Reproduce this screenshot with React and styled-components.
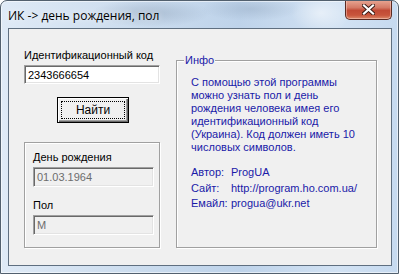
import React from "react";
import styled, { createGlobalStyle } from "styled-components";

const Global = createGlobalStyle`
  html, body { margin: 0; padding: 0; background: #ffffff; }
  body { width: 399px; height: 274px; overflow: hidden; }
  * { box-sizing: border-box; }
`;

const Window = styled.div`
  width: 399px;
  height: 274px;
  display: flex;
  flex-direction: column;
  border: 1px solid #52606e;
  border-radius: 7px 7px 0 0;
  background:
    radial-gradient(ellipse 60px 14px at 150px 12px, rgba(120,140,165,0.35), transparent),
    radial-gradient(ellipse 50px 12px at 250px 8px, rgba(130,150,175,0.3), transparent),
    radial-gradient(ellipse 30px 20px at 320px 12px, rgba(255,255,255,0.5), transparent),
    linear-gradient(90deg, #dfeaf6 0%, #cbdcee 35%, #bed3ea 60%, #d2e2f3 85%, #c6daf0 100%);
  box-shadow: inset 0 0 0 1px rgba(255,255,255,0.55);
  overflow: hidden;
`;

const TitleBar = styled.div`
  height: 27px;
  display: flex;
  align-items: flex-start;
  flex-shrink: 0;
`;

const Title = styled.div`
  padding: 8px 0 0 7px;
  font-family: "Open Sans", "Noto Sans", sans-serif;
  font-size: 12px;
  line-height: 14px;
  color: #000;
  text-shadow: 0 0 6px rgba(255,255,255,0.9);
`;

const CloseButton = styled.div`
  margin-left: auto;
  margin-right: 6px;
  margin-top: -1px;
  width: 47px;
  height: 20px;
  border: 1px solid #5a2a22;
  border-top: none;
  border-radius: 0 0 5px 5px;
  background: linear-gradient(180deg, #e9a895 0%, #d47a66 40%, #c14a35 55%, #c8553c 80%, #dc8a6a 100%);
  box-shadow: inset 0 0 0 1px rgba(255,220,210,0.45);
  display: flex;
  align-items: center;
  justify-content: center;
`;

const Client = styled.div`
  margin: 0 6px 7px 7px;
  flex: 1;
  border: 1px solid #5f6f80;
  background: #f0f0f0;
  display: flex;
  align-items: flex-start;
  gap: 16px;
  padding: 20px 0 0 15px;
  font-family: "Liberation Sans", Arial, sans-serif;
  font-size: 11px;
`;

const LeftColumn = styled.div`
  width: 136px;
  display: flex;
  flex-direction: column;
  align-items: flex-start;
`;

const Label = styled.div`
  line-height: 13px;
  height: 13px;
  color: #000;
  margin-top: ${p => p.$mt || 0}px;
`;

const Edit = styled.div`
  width: ${p => p.$w}px;
  height: ${p => p.$h}px;
  margin-top: ${p => p.$mt || 0}px;
  border: 1px solid;
  border-color: #a0a0a0 #ffffff #ffffff #a0a0a0;
  box-shadow: inset 1px 1px 0 #696969, inset -1px -1px 0 #e3e3e3;
  background: ${p => (p.$disabled ? "#f0f0f0" : "#ffffff")};
  color: ${p => (p.$disabled ? "#6d6d6d" : "#000")};
  padding: 0 0 0 3px;
  display: flex;
  align-items: center;
  font-size: 11px;
`;

const Button = styled.div`
  margin: 13px 0 0 33px;
  width: 72px;
  height: 26px;
  border: 1px solid #000;
  background: #f0f0f0;
  box-shadow: inset 1px 1px 0 #ffffff, inset -1px -1px 0 #696969, inset -2px -2px 0 #a0a0a0;
  padding: 3px;
  display: flex;
`;

const FocusRect = styled.div`
  flex: 1;
  border: 1px dotted #000;
  display: flex;
  align-items: center;
  justify-content: center;
  font-size: 12px;
  color: #000;
`;

const GroupBox = styled.div`
  position: relative;
  width: ${p => p.$w}px;
  height: ${p => p.$h}px;
  margin-top: ${p => p.$mt}px;
  margin-left: ${p => p.$ml || 0}px;
  border: 1px solid #a0a0a0;
  box-shadow: inset 1px 1px 0 #ffffff, 1px 1px 0 #ffffff;
  padding: ${p => p.$pad};
  display: flex;
  flex-direction: column;
`;

const Caption = styled.div`
  position: absolute;
  top: -7px;
  left: 7px;
  padding: 0 1px;
  background: #f0f0f0;
  line-height: 13px;
  color: #1a1aa8;
`;

const Info = styled.div`
  color: #1a1aa8;
  line-height: 13px;
`;

const Contacts = styled.div`
  margin-top: 11px;
  display: grid;
  grid-template-columns: 40px auto;
  line-height: 15.5px;
  color: #1a1aa8;
`;

const infoLines = [
  "С помощью этой программы",
  "можно узнать пол и день",
  "рождения человека имея его",
  "идентификационный код",
  "(Украина). Код должен иметь 10",
  "числовых символов.",
];

const contacts = [
  ["Автор:", "ProgUA"],
  ["Сайт:", "http://program.ho.com.ua/"],
  ["Емайл:", "progua@ukr.net"],
];

export default function App() {
  return (
    <>
      <Global />
      <Window>
        <TitleBar>
          <Title>ИК -&gt; день рождения, пол</Title>
          <CloseButton>
            <svg width="13" height="11" viewBox="0 0 13 11">
              <path d="M2 1.5 L11 9.5 M11 1.5 L2 9.5" stroke="#3a1a14" strokeWidth="4" strokeLinecap="square" />
              <path d="M2 1.5 L11 9.5 M11 1.5 L2 9.5" stroke="#ffffff" strokeWidth="2.2" strokeLinecap="square" />
            </svg>
          </CloseButton>
        </TitleBar>
        <Client>
          <LeftColumn>
            <Label>Идентификационный код</Label>
            <Edit $w={136} $h={19} $mt={3}>2343666654</Edit>
            <Button>
              <FocusRect>Найти</FocusRect>
            </Button>
            <GroupBox $w={136} $h={106} $mt={19} $pad="8px 0 0 8px">
              <Label>День рождения</Label>
              <Edit $w={121} $h={20} $mt={3} $disabled>01.03.1964</Edit>
              <Label $mt={12}>Пол</Label>
              <Edit $w={121} $h={20} $mt={3} $disabled>M</Edit>
            </GroupBox>
          </LeftColumn>
          <GroupBox $w={201} $h={188} $mt={11} $pad="15px 0 0 14px">
            <Caption>Инфо</Caption>
            <Info>
              {infoLines.map(l => (
                <div key={l}>{l}</div>
              ))}
            </Info>
            <Contacts>
              {contacts.map(([k, v]) => (
                <React.Fragment key={k}>
                  <span>{k}</span>
                  <span>{v}</span>
                </React.Fragment>
              ))}
            </Contacts>
          </GroupBox>
        </Client>
      </Window>
    </>
  );
}
